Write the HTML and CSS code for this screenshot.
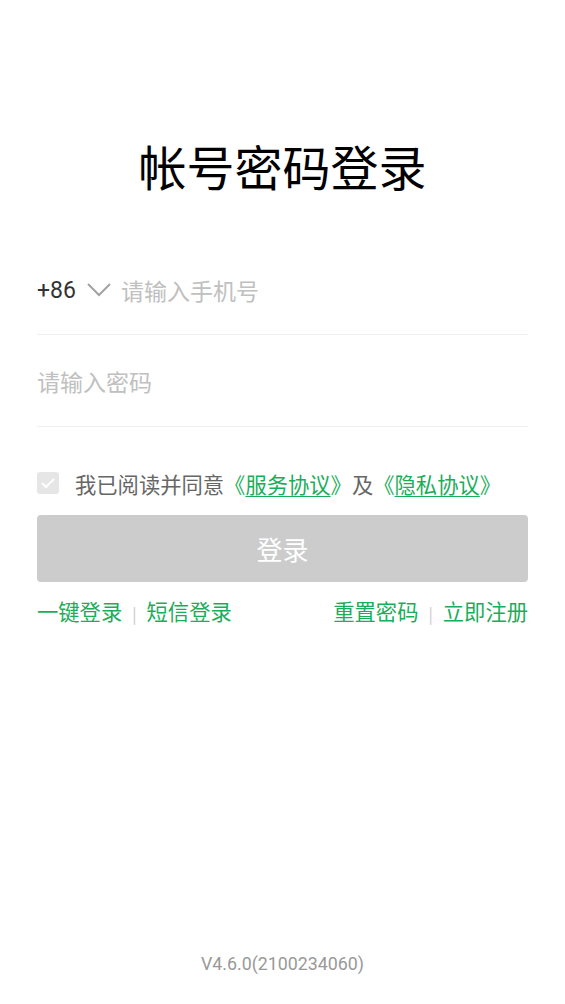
FILE: index.html
```html
<!DOCTYPE html>
<html>
<head>
<meta charset="UTF-8">
    <title>帐号密码登录</title>
    <link rel="stylesheet" href="styles.css">
</head>
<body>
    <div class="page">
        <h1 class="title">帐号密码登录</h1>

        <div class="field">
            <span class="code">+86</span>
            <svg class="arrow" width="24" height="14" viewBox="0 0 24 14"><path d="M1 1 L12 12 L23 1" fill="none" stroke="#a3a3a3" stroke-width="2"/></svg>
            <span class="hint">请输入手机号</span>
        </div>
        <div class="field">
            <span class="hint">请输入密码</span>
        </div>

        <div class="agree">
            <span class="check"><svg width="14" height="12" viewBox="0 0 14 12"><path d="M1 6 L5 10 L13 2" fill="none" stroke="#fff" stroke-width="2"/></svg></span>
            <span>我已阅读并同意</span><span class="green">《<u>服务协议</u>》</span><span>及</span><span class="green">《<u>隐私协议</u>》</span>
        </div>

        <button class="login">登录</button>

        <div class="links">
            <div class="group"><span>一键登录</span><i>|</i><span>短信登录</span></div>
            <div class="group"><span>重置密码</span><i>|</i><span>立即注册</span></div>
        </div>
    </div>
    <div class="version">V4.6.0(2100234060)</div>
</body>
</html>
```

FILE: styles.css
```css
body { margin: 0; background: #fff; font-family: "Noto Sans CJK SC", "Noto Sans", sans-serif; width: 565px; height: 1004px; position: relative; }
.page { padding: 0 37px; }
.title { margin: 0 0 40px; padding-top: 128px; height: 75px; font-size: 48px; font-weight: 400; text-align: center; color: #000; line-height: 75px; }
.field { height: 91px; border-bottom: 1px solid #f0f0f0; display: flex; align-items: center; font-size: 23px; }
.field:first-of-type { padding-top: 3px; height: 88px; }
.code { color: #333; font-family: Roboto, sans-serif; font-size: 23px; }
.arrow { margin: 0 10px 0 11px; }
.hint { color: #c0c0c0; }
.agree { display: flex; align-items: center; margin-top: 34px; height: 44px; font-size: 21.3px; color: #666; }
.check { width: 22px; height: 22px; border-radius: 3px; background: #e6e6e6; display: flex; align-items: center; justify-content: center; margin-right: 16px; }
.green { color: #1aad5a; }
.green u { text-decoration-thickness: 1px; text-underline-offset: 3px; }
.login { display: block; width: 100%; height: 67px; margin-top: 10px; border: none; border-radius: 4px; background: #cccccc; color: #fff; font-family: inherit; font-size: 26px; }
.links { display: flex; justify-content: space-between; margin-top: 14px; font-size: 21.3px; color: #1aad5a; line-height: 30px; }
.links i { font-style: normal; color: #c8c8c8; font-size: 16px; margin: 0 10px; }
.version { position: absolute; left: 0; right: 0; top: 953px; text-align: center; font-family: Roboto, sans-serif; font-size: 17.8px; color: #999; }
```
